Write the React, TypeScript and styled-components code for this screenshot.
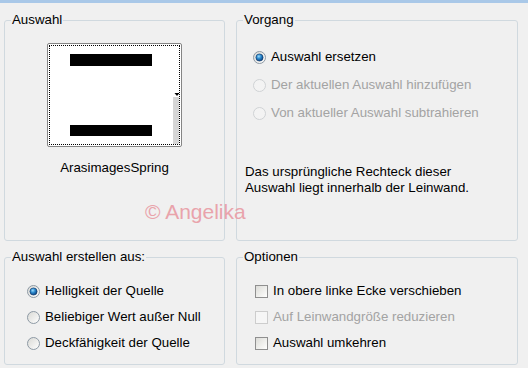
import React from "react";
import styled, { createGlobalStyle } from "styled-components";

const Global = createGlobalStyle`
  html, body { margin: 0; padding: 0; background: #f0f0f0; }
  body { font-family: "Liberation Sans", Arial, sans-serif; font-size: 13.3px; color: #000; }
`;

const Page = styled.div`
  position: relative;
  width: 528px;
  height: 368px;
  background: #f0f0f0;
  overflow: hidden;
`;

const TopBand = styled.div`
  height: 3px;
  background: #a9c8e8;
`;

const Grid = styled.div`
  display: grid;
  grid-template-columns: 221px 282px;
  grid-template-rows: 229px 116px;
  column-gap: 11px;
  row-gap: 8px;
  padding: 9px 0 0 4px;
`;

const Group = styled.fieldset`
  margin: 0;
  padding: 0;
  min-width: 0;
  box-sizing: border-box;
  border: 1px solid #d0d9df;
  border-radius: 3px;
`;

const Legend = styled.legend`
  margin-left: 6px;
  padding: 0 1px;
  line-height: 16px;
  font-size: 13.3px;
`;

const Body = styled.div<{ $pt: number; $pl: number; $gap?: number; $center?: boolean }>`
  display: flex;
  flex-direction: column;
  align-items: ${(p) => (p.$center ? "center" : "flex-start")};
  padding: ${(p) => p.$pt}px 0 0 ${(p) => p.$pl}px;
  gap: ${(p) => p.$gap ?? 0}px;
`;

const Preview = styled.div`
  width: 135px;
  height: 104px;
  box-sizing: border-box;
  border: 1px solid #858585;
  border-radius: 2px;
  background: #fff;
  padding: 1px;
`;

const Focus = styled.div`
  height: 100%;
  box-sizing: border-box;
  border: 1px dotted #000;
  display: flex;
`;

const Caption = styled.div`
  margin-top: 13px;
  line-height: 16px;
`;

const Option = styled.label<{ $disabled?: boolean }>`
  display: flex;
  align-items: center;
  gap: 5px;
  height: 16px;
  line-height: 16px;
  white-space: nowrap;
  color: ${(p) => (p.$disabled ? "#a3a3a3" : "#000")};
`;

const Box = styled.span<{ $disabled?: boolean }>`
  display: inline-block;
  width: 13px;
  height: 13px;
  box-sizing: border-box;
  border: 1px solid ${(p) => (p.$disabled ? "#cdcdcd" : "#8f8f8f")};
  background: ${(p) =>
    p.$disabled ? "#f6f6f6" : "linear-gradient(135deg, #dcdcd8 0%, #f4f4f2 70%, #ffffff 100%)"};
  flex: none;
`;

const Description = styled.p`
  margin: 31px 0 0 -8px;
  line-height: 16px;
`;

const Watermark = styled.div`
  position: absolute;
  left: 145px;
  top: 200px;
  font-size: 21px;
  line-height: 24px;
  color: #e9a3ab;
  white-space: nowrap;
  pointer-events: none;
`;

const RadioIcon: React.FC<{ checked?: boolean; disabled?: boolean }> = ({ checked, disabled }) => (
  <svg width="13" height="13" viewBox="0 0 13 13" style={{ flex: "none" }}>
    <defs>
      <linearGradient id="rbg" x1="0" y1="0" x2="1" y2="1">
        <stop offset="0" stopColor="#d8d8d4" />
        <stop offset="1" stopColor="#ffffff" />
      </linearGradient>
      <radialGradient id="rdot" cx="0.4" cy="0.35" r="0.7">
        <stop offset="0" stopColor="#9adcff" />
        <stop offset="0.45" stopColor="#2a88cc" />
        <stop offset="1" stopColor="#083a78" />
      </radialGradient>
    </defs>
    <circle
      cx="6.5"
      cy="6.5"
      r="6"
      fill={disabled ? "#f3f3f3" : "url(#rbg)"}
      stroke={disabled ? "#cfd2d4" : "#8d99a4"}
    />
    {checked && <circle cx="6.5" cy="6.5" r="3.6" fill="url(#rdot)" stroke="#0a3264" strokeWidth="0.6" />}
  </svg>
);

const Radio: React.FC<{ checked?: boolean; disabled?: boolean; children: React.ReactNode }> = ({
  checked,
  disabled,
  children,
}) => (
  <Option $disabled={disabled}>
    <RadioIcon checked={checked} disabled={disabled} />
    <span>{children}</span>
  </Option>
);

const Check: React.FC<{ disabled?: boolean; children: React.ReactNode }> = ({ disabled, children }) => (
  <Option $disabled={disabled}>
    <Box $disabled={disabled} />
    <span>{children}</span>
  </Option>
);

export default function App() {
  return (
    <Page>
      <Global />
      <TopBand />
      <Grid>
        <Group>
          <Legend>Auswahl</Legend>
          <Body $pt={15} $pl={0} $center>
            <Preview>
              <Focus>
                <svg width="129" height="98" viewBox="0 0 129 98">
                  <rect x="20" y="8" width="82" height="12" fill="#000" />
                  <rect x="20" y="79" width="82" height="11" fill="#000" />
                  <rect x="123" y="51" width="6" height="47" fill="#d6d6d6" />
                  <polygon points="124.5,47 129.5,47 127,50" fill="#000" />
                </svg>
              </Focus>
            </Preview>
            <Caption>ArasimagesSpring</Caption>
          </Body>
        </Group>
        <Group>
          <Legend>Vorgang</Legend>
          <Body $pt={21} $pl={16} $gap={12}>
            <Radio checked>Auswahl ersetzen</Radio>
            <Radio disabled>Der aktuellen Auswahl hinzufügen</Radio>
            <Radio disabled>Von aktueller Auswahl subtrahieren</Radio>
            <Description>
              Das ursprüngliche Rechteck dieser
              <br />
              Auswahl liegt innerhalb der Leinwand.
            </Description>
          </Body>
        </Group>
        <Group>
          <Legend>Auswahl erstellen aus:</Legend>
          <Body $pt={18} $pl={22} $gap={10}>
            <Radio checked>Helligkeit der Quelle</Radio>
            <Radio>Beliebiger Wert außer Null</Radio>
            <Radio>Deckfähigkeit der Quelle</Radio>
          </Body>
        </Group>
        <Group>
          <Legend>Optionen</Legend>
          <Body $pt={18} $pl={18} $gap={10}>
            <Check>In obere linke Ecke verschieben</Check>
            <Check disabled>Auf Leinwandgröße reduzieren</Check>
            <Check>Auswahl umkehren</Check>
          </Body>
        </Group>
      </Grid>
      <Watermark>© Angelika</Watermark>
    </Page>
  );
}
